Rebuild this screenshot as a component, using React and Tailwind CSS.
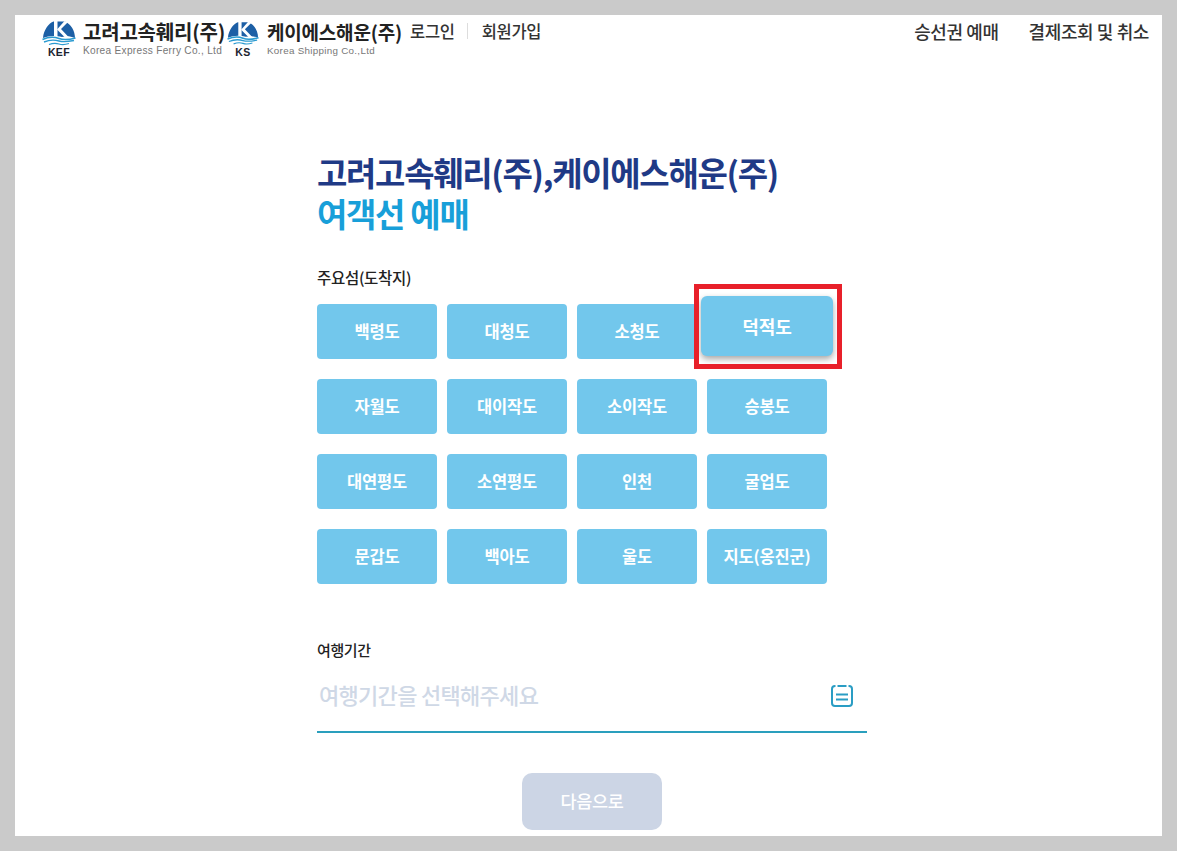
import React from "react";

const font = { fontFamily: '"Noto Sans CJK KR", "Noto Sans", sans-serif' };

function Logo({ label, width }) {
  return (
    <div className="flex flex-col items-center shrink-0" style={{ width }}>
      <svg viewBox="0 0 34 25" className="w-full h-[25px] block">
        <path d="M1 17 C1.5 9 7 2 11.5 0.5 L23 0.5 C29 3 33 10 33 17 C28 15 24 15 20 16 C12 14 6 15 1 17 Z" fill="#1d5fa5" />
        <path d="M12 0 L15.5 0 L15.5 16 L12 16 Z" fill="white" />
        <path d="M15 8.5 L22.5 0 L26 1 L19 8 L27 16.5 L23 16.5 Z" fill="white" />
        <path d="M0.5 18.5 C7 15.5 12 15.5 17 17.5 C22 19.5 28 18.5 33.5 17" fill="none" stroke="#2a9ad0" strokeWidth="1.6" />
        <path d="M2 21 C8 18.5 12 18.5 17 20 C22 21.5 27 20.5 32 19.5" fill="none" stroke="#2a9ad0" strokeWidth="1.4" />
        <path d="M7 23.5 C11 22 14 22 17 23 C20 24 24 23.5 27 22.5" fill="none" stroke="#2a9ad0" strokeWidth="1.2" />
      </svg>
      <span className="text-[10.5px] leading-[12px] font-bold text-[#1c2430] tracking-[0.4px]" style={{ fontFamily: '"Liberation Sans", sans-serif' }}>{label}</span>
    </div>
  );
}

function Brand({ name, sub, label, logoWidth, gap, width, nameSize, subSize }) {
  return (
    <div className="flex items-start shrink-0" style={{ width }}>
      <Logo label={label} width={logoWidth} />
      <div className="flex flex-col" style={{ marginLeft: gap }}>
        <span className="leading-[22px] font-bold text-[#222] whitespace-nowrap tracking-[-0.2px]" style={{ fontSize: nameSize }}>{name}</span>
        <span className="leading-[11px] mt-[2px] text-[#777] whitespace-nowrap tracking-[0.3px]" style={{ fontFamily: '"Liberation Sans", sans-serif', fontSize: subSize }}>{sub}</span>
      </div>
    </div>
  );
}

const islands = [
  "백령도", "대청도", "소청도", "덕적도",
  "자월도", "대이작도", "소이작도", "승봉도",
  "대연평도", "소연평도", "인천", "굴업도",
  "문갑도", "백아도", "울도", "지도(옹진군)",
];

export default function App() {
  return (
    <div className="h-[851px] w-[1177px] bg-[#cacaca] p-[15px] overflow-hidden" style={font}>
      <div className="h-[821px] bg-white flex flex-col overflow-hidden">
        <header className="flex items-start pl-[27px] pr-[13px] pt-[6px] h-[45px] shrink-0">
          <Brand name="고려고속훼리(주)" sub="Korea Express Ferry Co., Ltd" label="KEF" logoWidth={34} gap={7} width={185} nameSize={20} subSize={10.1} />
          <Brand name="케이에스해운(주)" sub="Korea Shipping Co.,Ltd" label="KS" logoWidth={32} gap={8} width={183} nameSize={19} subSize={9.8} />
          <nav className="flex items-center text-[16.5px] leading-[20px] text-[#333] font-medium tracking-[-0.3px]">
            <span>로그인</span>
            <span className="w-px h-[16px] bg-[#ddd] ml-[12px] mr-[14px]" />
            <span>회원가입</span>
          </nav>
          <nav className="ml-auto flex items-center gap-[30px] text-[18px] leading-[20px] text-[#333] font-medium tracking-[-0.4px]">
            <span>승선권 예매</span>
            <span>결제조회 및 취소</span>
          </nav>
        </header>

        <main className="w-[550px] ml-[302px] pt-[92px]">
          <h1 className="text-[33px] leading-[41px] font-bold text-[#1f3a86] tracking-[-1.3px] whitespace-nowrap">
            고려고속훼리(주),케이에스해운(주)
            <br />
            <span className="text-[#189fd9]">여객선 예매</span>
          </h1>

          <p className="mt-[33px] text-[15.5px] leading-[20px] font-medium text-[#222] tracking-[-0.3px]">주요섬(도착지)</p>

          <div className="mt-[17px] grid grid-cols-[repeat(4,120px)] auto-rows-[55px] gap-x-[10px] gap-y-[20px]">
            {islands.map((name) =>
              name === "덕적도" ? (
                <div key={name} className="relative">
                  <div className="absolute left-[-13px] top-[-20px] w-[148px] h-[85px] border-[5px] border-[#e8202a] z-10 pointer-events-none" />
                  <button className="absolute left-[-6px] top-[-8px] w-[132px] h-[60px] rounded-[6px] bg-[#72c7ec] text-white text-[18px] font-bold shadow-[0_3px_6px_rgba(0,0,0,0.35)]">
                    {name}
                  </button>
                </div>
              ) : (
                <button key={name} className="rounded-[4px] bg-[#72c7ec] text-white text-[16.5px] font-bold tracking-[-0.2px] whitespace-nowrap">
                  {name}
                </button>
              )
            )}
          </div>

          <p className="mt-[56px] text-[15px] leading-[20px] font-medium text-[#222] tracking-[-0.4px]">여행기간</p>

          <div className="mt-[18px] h-[55px] border-b-2 border-[#2a9fbd] flex items-start justify-between pl-[2px] pr-[14px]">
            <span className="text-[22px] leading-[32px] font-medium text-[#cfd8e6] tracking-[-0.7px]">여행기간을 선택해주세요</span>
            <svg viewBox="0 0 22 22" className="w-[22px] h-[22px] mt-[7px] text-[#2a9dc4]" fill="none" stroke="currentColor" strokeWidth="2">
              <rect x="1" y="1" width="20" height="20" rx="3" />
              <path d="M4.5 1h2M15.5 1h2" stroke="white" strokeWidth="2.4" />
              <path d="M5 9.5h12M5 14.5h12" />
            </svg>
          </div>

          <div className="mt-[40px] flex justify-center">
            <button className="w-[140px] h-[57px] rounded-[10px] bg-[#ccd5e5] text-white text-[17.5px] font-medium tracking-[-0.3px]">
              다음으로
            </button>
          </div>
        </main>
      </div>
    </div>
  );
}
